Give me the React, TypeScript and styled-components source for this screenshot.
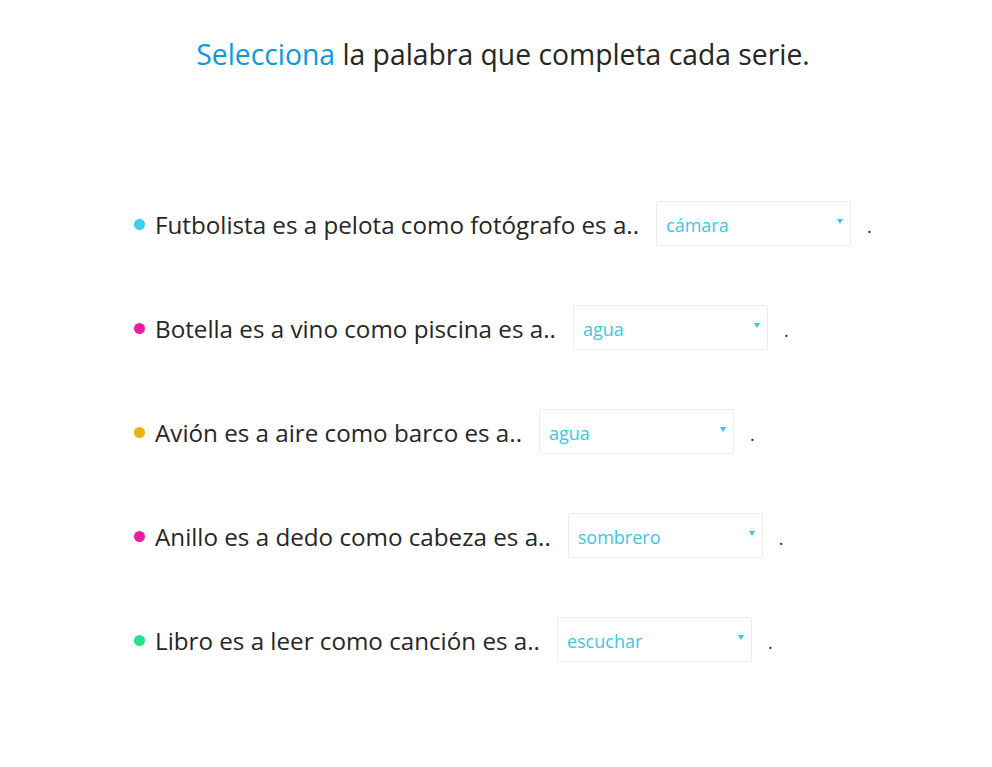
import React from "react";
import styled, { createGlobalStyle } from "styled-components";

const Global = createGlobalStyle`
  html, body { margin: 0; padding: 0; background: #ffffff; }
  body { font-family: "Open Sans", "Noto Sans", sans-serif; color: #262626; }
`;

const Page = styled.main`
  width: 992px;
  min-height: 767px;
  display: flex;
  flex-direction: column;
  align-items: center;
`;

const Title = styled.h1`
  margin: 34px 0 0;
  padding-left: 14px;
  font-size: 28.3px;
  font-weight: 400;
  line-height: 40px;
  color: #262626;
  letter-spacing: 0;
`;

const Accent = styled.span`
  color: #0e9ad8;
`;

const List = styled.ul`
  list-style: none;
  margin: 127px 0 0;
  padding: 0 0 0 134px;
  align-self: stretch;
  display: flex;
  flex-direction: column;
  gap: 59px;
`;

const Row = styled.li`
  display: flex;
  align-items: center;
  height: 45px;
`;

const Dot = styled.span<{ $color: string }>`
  width: 11px;
  height: 11px;
  border-radius: 50%;
  background: ${(p) => p.$color};
  margin: 2px 10px 0 0;
  flex: none;
`;

const Sentence = styled.span`
  font-size: 24.2px;
  color: #262626;
  white-space: nowrap;
  padding-top: 1px;
`;

const SelectWrap = styled.label`
  position: relative;
  width: 195px;
  height: 45px;
  margin-left: 17px;
  box-sizing: border-box;
  border: 1px solid #ececec;
  border-radius: 2px;
  flex: none;
`;

const Select = styled.select`
  appearance: none;
  -webkit-appearance: none;
  width: 100%;
  height: 100%;
  border: none;
  background: transparent;
  padding: 3px 0 0 9px;
  font-family: "Open Sans", "Noto Sans", sans-serif;
  font-size: 18px;
  color: #3cc6ea;
  outline: none;
`;

const Arrow = styled.span`
  position: absolute;
  right: 7px;
  top: 17px;
  width: 0;
  height: 0;
  border-left: 3px solid transparent;
  border-right: 3px solid transparent;
  border-top: 5px solid #3cc6ea;
  pointer-events: none;
`;

const Period = styled.span`
  margin-left: 16px;
  font-size: 18px;
  color: #262626;
  padding-top: 4px;
`;

const items = [
  { color: "#39cff5", text: "Futbolista es a pelota como fotógrafo es a..", value: "cámara", options: ["cámara", "foto", "imagen"] },
  { color: "#f21ba9", text: "Botella es a vino como piscina es a..", value: "agua", options: ["agua", "nadar", "bañador"] },
  { color: "#efb10f", text: "Avión es a aire como barco es a..", value: "agua", options: ["agua", "puerto", "vela"] },
  { color: "#f21ba9", text: "Anillo es a dedo como cabeza es a..", value: "sombrero", options: ["sombrero", "pelo", "cuello"] },
  { color: "#21e68b", text: "Libro es a leer como canción es a..", value: "escuchar", options: ["escuchar", "cantar", "bailar"] },
];

export default function App() {
  return (
    <>
      <Global />
      <Page>
        <Title>
          <Accent>Selecciona</Accent> la palabra que completa cada serie.
        </Title>
        <List>
          {items.map((it, i) => (
            <Row key={i}>
              <Dot $color={it.color} />
              <Sentence>{it.text}</Sentence>
              <SelectWrap>
                <Select defaultValue={it.value}>
                  {it.options.map((o) => (
                    <option key={o} value={o}>{o}</option>
                  ))}
                </Select>
                <Arrow />
              </SelectWrap>
              <Period>.</Period>
            </Row>
          ))}
        </List>
      </Page>
    </>
  );
}
